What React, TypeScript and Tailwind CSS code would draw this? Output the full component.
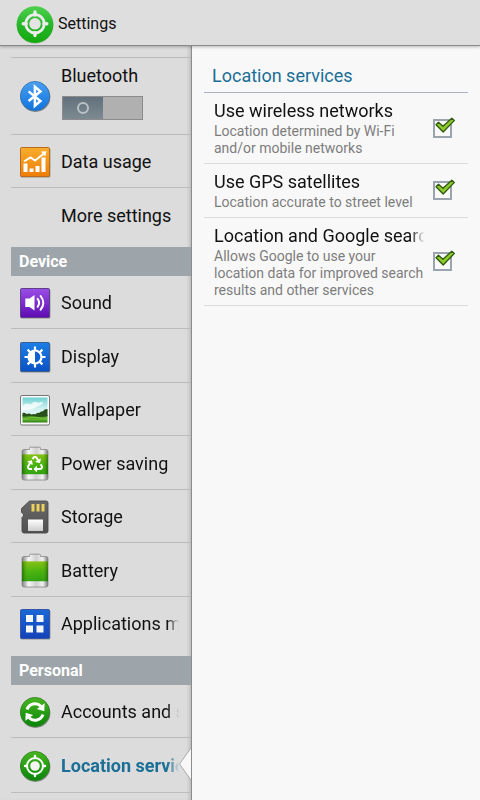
import { useState, type ReactNode } from "react";
import { FaRecycle } from "react-icons/fa";

type SettingsItem = {
  id: string;
  label: string;
  icon: ReactNode;
};

type Preference = {
  id: string;
  title: string;
  summary: string;
};

const HeaderIcon = () => (
  <svg viewBox="0 0 38 40" className="h-10 w-[38px] shrink-0" aria-hidden="true">
    <defs>
      <linearGradient id="header-green" x1="0" y1="0" x2="0" y2="1">
        <stop offset="0" stopColor="#4fd04c" />
        <stop offset="0.5" stopColor="#27b62c" />
        <stop offset="1" stopColor="#12a90c" />
      </linearGradient>
    </defs>
    <circle cx="19" cy="21.4" r="18.2" fill="#9bb59b" />
    <circle cx="19" cy="20.6" r="18.4" fill="url(#header-green)" />
    <circle cx="19" cy="19.8" r="9.2" fill="none" stroke="#ececec" strokeWidth="2.8" />
    <circle cx="19" cy="19.8" r="5.8" fill="#e4e4e4" />
    <path
      d="M19 8v3M19 28.6v3M7.2 19.8h3M27.8 19.8h3"
      stroke="#ececec"
      strokeWidth="3.4"
      strokeLinecap="round"
    />
  </svg>
);

const BluetoothIcon = () => (
  <svg viewBox="0 0 32 32" className="size-8 shrink-0" aria-hidden="true">
    <defs>
      <linearGradient id="bt-blue" x1="0" y1="0" x2="0" y2="1">
        <stop offset="0" stopColor="#4aa0ee" />
        <stop offset="1" stopColor="#0f73e0" />
      </linearGradient>
    </defs>
    <circle cx="16.4" cy="17" r="15" fill="#77808a" />
    <circle cx="16" cy="16" r="14.6" fill="url(#bt-blue)" stroke="#3170ad" strokeWidth="0.8" />
    <path
      d="M9.600 11.400 21.400 21 15.900 25.700V6.700L21.400 11.400 9.600 21"
      fill="none"
      stroke="#fff"
      strokeWidth="2.5"
    />
  </svg>
);

const Tile = ({ id, from, to, edge, children }: { id: string; from: string; to: string; edge: string; children: ReactNode }) => (
  <svg viewBox="0 0 32 32" className="size-8 shrink-0" aria-hidden="true">
    <defs>
      <linearGradient id={id} x1="0" y1="0" x2="0" y2="1">
        <stop offset="0" stopColor={from} />
        <stop offset="1" stopColor={to} />
      </linearGradient>
    </defs>
    <rect x="1.4" y="2" width="30" height="29.6" rx="1.6" fill="#8d8d8d" />
    <rect x="1.5" y="1.5" width="29" height="29" rx="1.2" fill={`url(#${id})`} stroke={edge} />
    {children}
  </svg>
);

const GreenDisc = ({ id, children }: { id: string; children: ReactNode }) => (
  <svg viewBox="0 0 32 32" className="size-8 shrink-0" aria-hidden="true">
    <defs>
      <linearGradient id={id} x1="0" y1="0" x2="0" y2="1">
        <stop offset="0" stopColor="#48b520" />
        <stop offset="1" stopColor="#08860a" />
      </linearGradient>
    </defs>
    <circle cx="16.4" cy="17" r="15" fill="#7f8a7f" />
    <circle cx="16" cy="16" r="14.6" fill={`url(#${id})`} stroke="#2c7d1c" strokeWidth="0.8" />
    {children}
  </svg>
);

const BatteryShape = ({ id, children }: { id: string; children?: ReactNode }) => (
  <svg viewBox="0 0 32 36" className="h-9 w-8 shrink-0" aria-hidden="true">
    <defs>
      <linearGradient id={`${id}-metal`} x1="0" y1="0" x2="1" y2="0">
        <stop offset="0" stopColor="#7e7e7e" />
        <stop offset="0.25" stopColor="#f6f6f6" />
        <stop offset="0.55" stopColor="#cfcfcf" />
        <stop offset="0.8" stopColor="#f2f2f2" />
        <stop offset="1" stopColor="#777" />
      </linearGradient>
      <linearGradient id={`${id}-green`} x1="0" y1="0" x2="0" y2="1">
        <stop offset="0" stopColor="#86bd10" />
        <stop offset="0.5" stopColor="#3fae0a" />
        <stop offset="1" stopColor="#22990c" />
      </linearGradient>
      <linearGradient id={`${id}-shade`} x1="0" y1="0" x2="1" y2="0">
        <stop offset="0" stopColor="#104d00" stopOpacity="0.6" />
        <stop offset="0.25" stopColor="#9be03a" stopOpacity="0.15" />
        <stop offset="0.75" stopColor="#9be03a" stopOpacity="0.1" />
        <stop offset="1" stopColor="#104d00" stopOpacity="0.6" />
      </linearGradient>
    </defs>
    <path
      d="M10.5 3.5V2.2Q10.5 1.2 11.5 1.2h9Q21.5 1.2 21.5 2.2v1.3H27Q29 3.5 29 5.5v26.5Q29 34 27 34H5Q3 34 3 32V5.5Q3 3.5 5 3.5Z"
      fill={`url(#${id}-metal)`}
      stroke="#858585"
      strokeWidth="0.8"
    />
    <rect x="3" y="8.4" width="26" height="19.8" fill={`url(#${id}-green)`} />
    <rect x="3" y="8.4" width="26" height="19.8" fill={`url(#${id}-shade)`} />
    {children}
  </svg>
);

const DataUsageIcon = () => (
  <Tile id="data-orange" from="#f7ad2d" to="#ee7d08" edge="#b96c1c">
    <path d="M4.5 17.500h4V26h-4zM10.500 22.500h4V26h-4zM16.500 20h4v6h-4zM22.500 11.500h4V26h-4z" fill="#fff" />
    <path d="m5 15.500 6.500-4 4.500 3 9-7" fill="none" stroke="#fff" strokeWidth="2" />
    <path d="m21.800 5.500 5.700-.3-1.300 5.300z" fill="#fff" />
  </Tile>
);

const SoundIcon = () => (
  <Tile id="sound-purple" from="#9a4fe6" to="#5f0cb3" edge="#5d3f8c">
    <path d="M6.300 11.500h4.200L15.500 8v15.500l-5-3.500H6.300z" fill="#fff" />
    <path
      d="M18.600 11.800q3 4 0 8M21.600 9q5.400 6.800 0 13.600"
      fill="none"
      stroke="#fff"
      strokeWidth="2"
      strokeLinecap="round"
    />
  </Tile>
);

const DisplayIcon = () => (
  <Tile id="display-blue" from="#1c7fe6" to="#0b51c4" edge="#3c5f92">
    <path
      d="M16 5.500v4M16 22.500v4M5.500 16h4M22.500 16h4M8.600 8.600l3 3M23.400 8.600l-3 3M8.600 23.400l3-3M23.400 23.400l-3-3"
      stroke="#fff"
      strokeWidth="2.200"
    />
    <circle cx="16" cy="16" r="6.500" fill="#0f62d4" stroke="#fff" strokeWidth="2.200" />
    <path d="M16 9v14a7 7 0 0 1 0-14z" fill="#fff" />
  </Tile>
);

const WallpaperIcon = () => (
  <svg viewBox="0 0 32 32" className="size-8 shrink-0" aria-hidden="true">
    <defs>
      <linearGradient id="wall-sky" x1="0" y1="0" x2="0" y2="1">
        <stop offset="0" stopColor="#6fd0d2" />
        <stop offset="0.45" stopColor="#d3f1f2" />
        <stop offset="1" stopColor="#f4fbfa" />
      </linearGradient>
      <linearGradient id="wall-grass" x1="0" y1="0" x2="0" y2="1">
        <stop offset="0" stopColor="#3c7a1e" />
        <stop offset="0.6" stopColor="#5fb52b" />
        <stop offset="1" stopColor="#2f7a18" />
      </linearGradient>
    </defs>
    <rect x="1.500" y="1.500" width="29" height="29.500" rx="1.500" fill="#fbfbfb" stroke="#777" />
    <rect x="3.500" y="3.500" width="25" height="25" fill="url(#wall-sky)" />
    <path d="M3.500 12q4-4 8-1.500 4-4.500 8-1.500 3-2 5 0-4 3-8 4.500-5 3-13 3z" fill="#fff" opacity="0.750" />
    <path d="M3.500 21h25v7.500h-25z" fill="url(#wall-grass)" />
    <path
      d="M3.500 19q2-1 4 1 3-1 5 .5 2-1 4-.2 1-2 4-1.500 1-1.800 3.500-1.600 1-2.200 4.500-2.200V22q-8 1.500-12 .5-6-1-13 0z"
      fill="#28501a"
    />
    <path d="M5 25q8-3 14-1.500t9 .5" fill="none" stroke="#7cc83c" strokeWidth="1" />
  </svg>
);

const PowerSavingIcon = () => (
  <BatteryShape id="power">
    <FaRecycle x="8" y="10" size={16} color="#fff" />
  </BatteryShape>
);

const StorageIcon = () => (
  <svg viewBox="0 0 32 36" className="h-9 w-8 shrink-0" aria-hidden="true">
    <defs>
      <linearGradient id="sd-body" x1="0" y1="0" x2="0" y2="1">
        <stop offset="0" stopColor="#686868" />
        <stop offset="1" stopColor="#505050" />
      </linearGradient>
      <linearGradient id="sd-label" x1="0" y1="0" x2="0" y2="1">
        <stop offset="0" stopColor="#fff" />
        <stop offset="1" stopColor="#ccc" />
      </linearGradient>
    </defs>
    <path
      d="M10.500 2H27q2 0 2 2v28q0 2-2 2H5q-2 0-2-2V18.500l1.500-1.500v-2L2.500 13.500V9.500z"
      fill="url(#sd-body)"
      stroke="#4b4b4b"
      strokeWidth="0.900"
    />
    <path d="M12.500 5h3v7.500h-3zM17.500 5h3v7.500h-3zM22.500 5h3v7.500h-3z" fill="#ecd05c" />
    <path d="M9 20.500h15V32H9z" fill="url(#sd-label)" />
  </svg>
);

const ApplicationsIcon = () => (
  <Tile id="apps-blue" from="#1b68d6" to="#1441b8" edge="#3556a8">
    <path d="M7 7h7v7H7zM17.500 7h7v7h-7zM7 17.500h7v7H7zM17.500 17.500h7v7h-7z" fill="#f6f6f6" />
  </Tile>
);

const AccountsIcon = () => (
  <GreenDisc id="accounts-green">
    <path
      d="M8 13.500A8.500 8.500 0 0 1 22 10.200M24 18.500A8.500 8.500 0 0 1 10 21.800"
      fill="none"
      stroke="#fff"
      strokeWidth="3"
    />
    <path d="m25.600 7.200-.3 8-7.400-2.200zM6.400 24.800l.3-8 7.400 2.200z" fill="#fff" />
  </GreenDisc>
);

const LocationIcon = () => (
  <GreenDisc id="location-green">
    <circle cx="16" cy="16" r="8" fill="none" stroke="#fff" strokeWidth="2" />
    <circle cx="16" cy="16" r="4.800" fill="#f4f4f4" />
    <path
      d="M16 6v2M16 24v2M6 16h2M24 16h2"
      stroke="#fff"
      strokeWidth="2.400"
      strokeLinecap="round"
    />
  </GreenDisc>
);

const deviceItems: SettingsItem[] = [
  { id: "sound", label: "Sound", icon: <SoundIcon /> },
  { id: "display", label: "Display", icon: <DisplayIcon /> },
  { id: "wallpaper", label: "Wallpaper", icon: <WallpaperIcon /> },
  { id: "power", label: "Power saving", icon: <PowerSavingIcon /> },
  { id: "storage", label: "Storage", icon: <StorageIcon /> },
  { id: "battery", label: "Battery", icon: <BatteryShape id="battery" /> },
  { id: "applications", label: "Applications manager", icon: <ApplicationsIcon /> },
];

const personalItems: SettingsItem[] = [
  { id: "accounts", label: "Accounts and sync", icon: <AccountsIcon /> },
  { id: "location", label: "Location services", icon: <LocationIcon /> },
];

const preferences: Preference[] = [
  {
    id: "wireless",
    title: "Use wireless networks",
    summary: "Location determined by Wi-Fi and/or mobile networks",
  },
  {
    id: "gps",
    title: "Use GPS satellites",
    summary: "Location accurate to street level",
  },
  {
    id: "search",
    title: "Location and Google search",
    summary: "Allows Google to use your location data for improved search results and other services",
  },
];

function SidebarRow({ item, active, onSelect }: { item: SettingsItem; active: boolean; onSelect: (id: string) => void }) {
  return (
    <li className="relative h-[53px] border-b border-[#bcbcbc] last:border-transparent even:h-[54px]">
      <button
        onClick={() => onSelect(item.id)}
        className="flex h-full w-full items-center gap-[10px] pt-0.5 pr-3 pl-2 text-left"
      >
        <span className="flex w-8 shrink-0 justify-center">{item.icon}</span>
        <span
          className={`min-w-0 flex-1 overflow-hidden whitespace-nowrap mask-r-from-90% text-lg leading-6 ${
            active ? "font-bold text-[#1b6f96]" : "text-[#111]"
          }`}
        >
          {item.label}
        </span>
      </button>
      {active && (
        <svg viewBox="0 0 12 32" className="absolute right-0 top-2.5 z-10 h-8 w-3" aria-hidden="true">
          <path d="M12 0 0 16l12 16z" fill="#f8f8f8" />
          <path d="M12 0 .5 16 12 32" fill="none" stroke="#a8a8a8" strokeWidth="1" />
        </svg>
      )}
    </li>
  );
}

function SectionTitle({ children }: { children: string }) {
  return (
    <h2 className="mt-1.5 bg-[#9da5aa] py-1 pl-2 text-base leading-[21px] font-bold text-white">
      {children}
    </h2>
  );
}

function PreferenceRow({ pref, checked, onToggle }: { pref: Preference; checked: boolean; onToggle: () => void }) {
  return (
    <li className="border-b border-[#dcdcdc]">
      <label htmlFor={pref.id} className="flex items-center gap-1 py-1.5 pr-4 pl-[10px]">
        <span className="min-w-0 flex-1">
          <span className="block overflow-hidden text-lg leading-6 whitespace-nowrap text-[#111] mask-r-from-91% mask-r-to-98%">
            {pref.title}
          </span>
          <span className="block text-sm leading-[17px] text-[#7d7d7d]">{pref.summary}</span>
        </span>
        <span className="relative size-[19px] shrink-0">
          <input
            id={pref.id}
            type="checkbox"
            checked={checked}
            onChange={onToggle}
            className="block size-[19px] appearance-none border-2 border-[#9aa3ae] bg-[#fafafa]"
          />
          {checked && (
            <svg
              viewBox="0 0 22 18"
              className="pointer-events-none absolute -top-0.5 left-0.5 h-[18px] w-[22px]"
              aria-hidden="true"
            >
              <path
                d="M1 7.800 3.500 5.300 8 9.200 16.800 1.200 19.400 3.400 8.200 15z"
                fill="#8fca2c"
                stroke="#2f5a10"
                strokeWidth="1.300"
                strokeLinejoin="round"
              />
            </svg>
          )}
        </span>
      </label>
    </li>
  );
}

export default function App() {
  const [selected, setSelected] = useState("location");
  const [bluetooth, setBluetooth] = useState(false);
  const [enabled, setEnabled] = useState<Record<string, boolean>>({
    wireless: true,
    gps: true,
    search: true,
  });

  const toggle = (id: string) => setEnabled((prev) => ({ ...prev, [id]: !prev[id] }));

  return (
    <div className="flex min-h-screen flex-col bg-[#dcdcdc] font-['Roboto',sans-serif]">
      {/* Action bar */}
      <header className="relative z-20 flex h-[46px] items-center gap-1 border-b border-[#888] bg-[#dedede] pt-0.5 pl-4 shadow-[0_1px_3px_rgba(0,0,0,0.25)]">
        <HeaderIcon />
        <h1 className="text-base text-[#111]">Settings</h1>
      </header>

      <div className="flex flex-1">
        {/* Categories */}
        <nav className="relative w-2/5 shrink-0 border-r border-[#8c8c8c] pt-[11px] pl-[11px] shadow-[inset_-4px_0_4px_-3px_rgba(0,0,0,0.2)]">
          <div className="flex items-center gap-[10px] border-y border-[#bcbcbc] py-1.5 pl-2">
            <BluetoothIcon />
            <div className="flex flex-col gap-2 pb-2">
              <span id="bluetooth-label" className="text-lg leading-6 text-[#111]">
                Bluetooth
              </span>
              <button
                role="switch"
                aria-checked={bluetooth}
                aria-labelledby="bluetooth-label"
                onClick={() => setBluetooth(!bluetooth)}
                className={`ml-px flex h-6 w-[81px] border border-[#8b8b8b] bg-[#b0b0b0] ${
                  bluetooth ? "justify-end" : "justify-start"
                }`}
              >
                <span className="flex h-full w-1/2 items-center justify-center bg-linear-to-b from-[#62717b] to-[#7d8a92]">
                  <span className="size-3 rounded-full border-2 border-[#b9c1c6]" />
                </span>
              </button>
            </div>
          </div>
          <ul>
            <li className="h-[53px] border-b border-[#bcbcbc]">
              <button className="flex h-full w-full items-center gap-[10px] pt-0.5 pl-2 text-left text-lg leading-6 text-[#111]">
                <DataUsageIcon />
                Data usage
              </button>
            </li>
            <li className="h-[53px]">
              <button className="flex h-full w-full items-center pt-0.5 pl-[50px] text-left text-lg leading-6 text-[#111]">
                More settings
              </button>
            </li>
          </ul>

          <SectionTitle>Device</SectionTitle>
          <ul>
            {deviceItems.map((item) => (
              <SidebarRow key={item.id} item={item} active={selected === item.id} onSelect={setSelected} />
            ))}
          </ul>

          <SectionTitle>Personal</SectionTitle>
          <ul className="border-b border-[#bcbcbc]">
            {personalItems.map((item) => (
              <SidebarRow key={item.id} item={item} active={selected === item.id} onSelect={setSelected} />
            ))}
          </ul>
        </nav>

        {/* Detail pane */}
        <main className="min-w-0 flex-1 bg-[#f8f8f8] px-3 pt-[18px]">
          <h2 className="border-b border-[#a9b3c4] pb-1 pl-2 text-lg leading-6 text-[#1b6f96]">
            Location services
          </h2>
          <ul>
            {preferences.map((pref) => (
              <PreferenceRow
                key={pref.id}
                pref={pref}
                checked={enabled[pref.id]}
                onToggle={() => toggle(pref.id)}
              />
            ))}
          </ul>
        </main>
      </div>
    </div>
  );
}
